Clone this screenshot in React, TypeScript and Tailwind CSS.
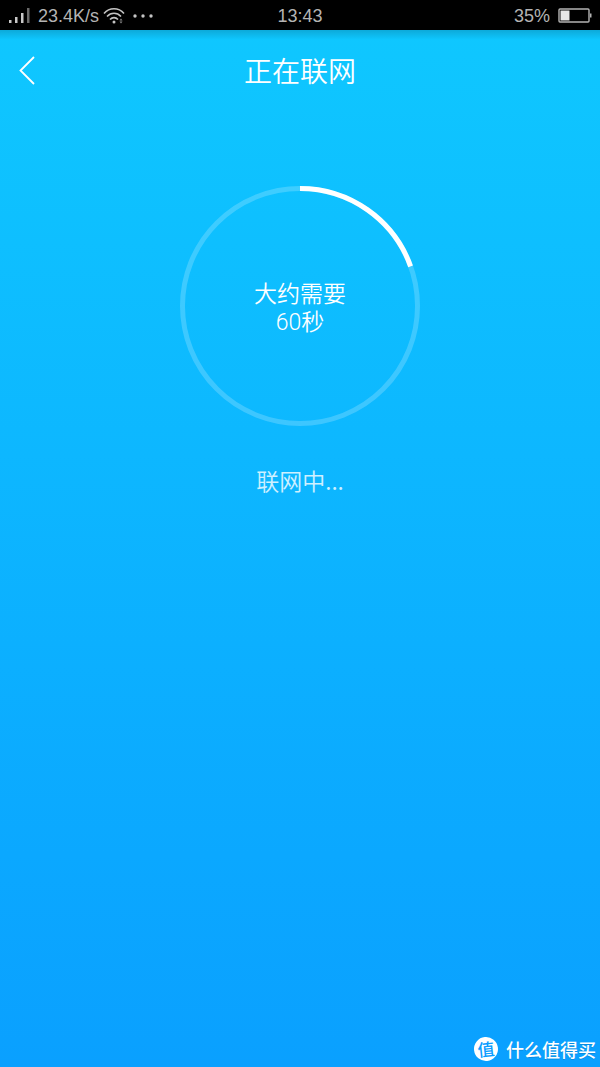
const RADIUS = 117.5;
const CIRCUMFERENCE = 2 * Math.PI * RADIUS;

function SignalIcon() {
    return (
        <svg width="22" height="18" viewBox="0 0 22 18" aria-hidden="true">
            <path d="M1 13h2.500v3H1zM7 10h2.500v6H7zM13 6h2.500v10h-2.500z" fill="#c8c8c8" />
            <path d="M19 1h2.500v15h-2.500z" fill="#6a6a6a" />
        </svg>
    );
}

function WifiIcon() {
    return (
        <svg width="22" height="18" viewBox="0 0 22 18" fill="none" stroke="#c4c4c4" strokeWidth="1.6" aria-hidden="true">
            <path d="M1 6.500C6.500 .2 15.500 .2 21 6.500" />
            <path d="M4 9.500C8 5.200 14 5.200 18 9.500" />
            <path d="M7 12.500C9.300 10 12.700 10 15 12.500" />
            <circle cx="11" cy="15" r="1.5" fill="#c4c4c4" stroke="none" />
            <path d="M16.500 13.500l1.500-2 1.500 2zM16.500 14.500l1.500 2 1.500-2z" fill="#8a8a8a" stroke="none" />
        </svg>
    );
}

function BatteryIcon() {
    return (
        <svg width="34" height="16" viewBox="0 0 34 16" aria-hidden="true">
            <rect x="1" y="1" width="30" height="13" rx="1" fill="none" stroke="#b4b4b4" strokeWidth="1.4" />
            <rect x="2.5" y="2.5" width="9" height="10" fill="#e6e6e6" />
            <path d="M32 5.500h1.500v4H32z" fill="#b4b4b4" />
        </svg>
    );
}

function StatusBar() {
    return (
        <div className="grid grid-cols-3 items-center h-[30px] px-2 bg-black text-[#b4b4b4] text-[18px] leading-8 font-['Liberation_Sans',sans-serif]">
            <div className="flex items-center">
                <SignalIcon />
                <span className="ml-2 mr-1">23.4K/s</span>
                <WifiIcon />
                <svg className="ml-2" width="20" height="4" viewBox="0 0 20 4" fill="#c4c4c4" aria-hidden="true">
                    <circle cx="2" cy="2" r="1.7" />
                    <circle cx="10" cy="2" r="1.7" />
                    <circle cx="18" cy="2" r="1.7" />
                </svg>
            </div>
            <time className="text-center">13:43</time>
            <div className="flex items-center justify-end gap-2">
                <span>35%</span>
                <BatteryIcon />
            </div>
        </div>
    );
}

function ProgressRing({ progress }: { progress: number }) {
    return (
        <div className="grid place-items-center mx-auto mt-[76px] w-60 h-60">
            <svg className="col-start-1 row-start-1" width="240" height="240" viewBox="0 0 240 240" fill="none" strokeWidth="5" aria-hidden="true">
                <circle cx="120" cy="120" r={RADIUS} stroke="white" strokeOpacity="0.2" />
                <circle
                    cx="120"
                    cy="120"
                    r={RADIUS}
                    stroke="white"
                    strokeDasharray={`${CIRCUMFERENCE * progress} ${CIRCUMFERENCE}`}
                    transform="rotate(-90 120 120)"
                />
            </svg>
            <p className="col-start-1 row-start-1 pt-1.5 text-center text-[23px] leading-7 font-[350] font-['Roboto','Noto_Sans_CJK_SC',sans-serif]">
                大约需要
                <br />
                60秒
            </p>
        </div>
    );
}

export default function App() {
    return (
        <div className="flex flex-col min-h-screen text-white font-['Noto_Sans_CJK_SC',sans-serif]">
            <StatusBar />

            <main className="flex flex-col flex-1 bg-linear-to-b/srgb from-[#0fc7ff] to-[#0aa0ff]">
                {/* Soft shade under the status bar */}
                <div className="bg-linear-to-b from-black/15 to-transparent to-[10px]">
                    <header className="grid grid-cols-[48px_1fr_48px] items-center h-20">
                        <button type="button" aria-label="返回" className="pl-4">
                            <svg width="22" height="32" viewBox="0 0 22 32" fill="none" stroke="white" strokeWidth="1.8" aria-hidden="true">
                                <path d="M18 3L4.500 16.500L18 30" />
                            </svg>
                        </button>
                        <h1 className="text-center text-[28px] leading-10 font-[350]">正在联网</h1>
                    </header>
                </div>

                <ProgressRing progress={0.195} />

                <p className="mt-9 text-center text-[23px] leading-9 font-[350] text-white/80">联网中...</p>

                {/* Source mark */}
                <footer className="flex items-center justify-end gap-2 mt-auto pr-1 pb-1 text-shadow-2xs">
                    <span className="flex items-center justify-center w-6 h-6 -rotate-6 rounded-full bg-white text-[#0a9dff] text-[17px] leading-6 font-medium text-shadow-none">
                        值
                    </span>
                    <span className="text-[18px] leading-7 font-medium">什么值得买</span>
                </footer>
            </main>
        </div>
    );
}
